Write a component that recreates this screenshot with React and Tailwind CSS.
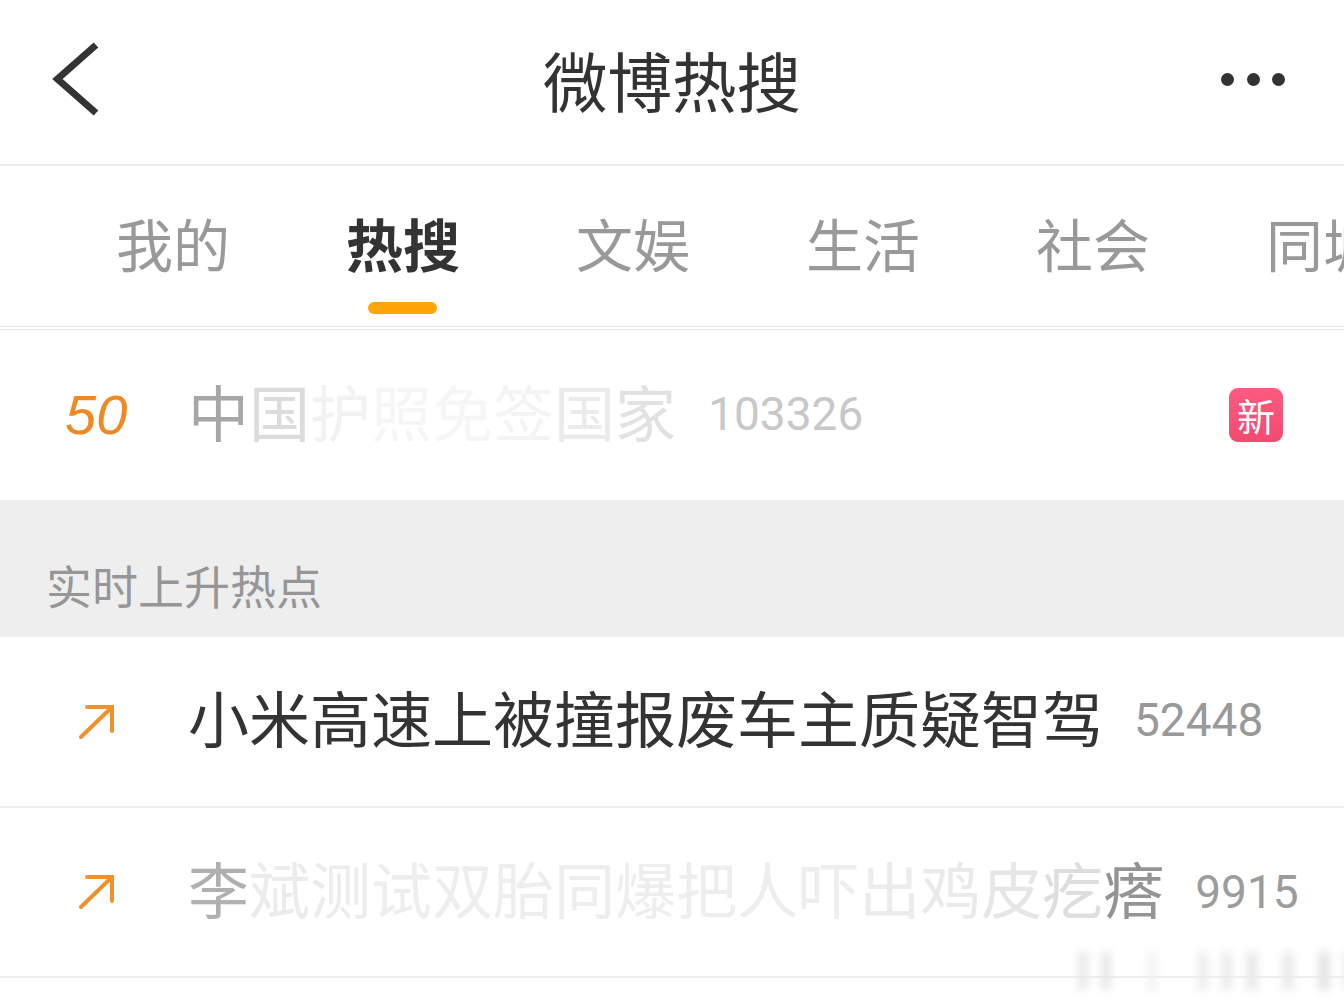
const CJK = "font-['Noto_Sans_CJK_SC','Noto_Sans',sans-serif]";

const TABS = ['我的', '热搜', '文娱', '生活', '社会', '同城'];

// per-character fade on the half-loaded titles: dark at the ends, almost white in between
const FadedTitle = ({ chars, colors }) => (
  <span className={`text-[61px] leading-none whitespace-nowrap mb-[10px] ${CJK}`}>
    {chars.split('').map((ch, i) => (
      <span key={i} style={{ color: colors[i] ?? '#f0f0f0' }}>{ch}</span>
    ))}
  </span>
);

const UpArrow = () => (
  <svg width="36" height="36" viewBox="0 0 36 36" fill="none" className="ml-[79px]">
    <path d="M2 33 L33 3 M8 3 H33 V27" stroke="#f0922c" strokeWidth="4" strokeLinecap="round" strokeLinejoin="miter" />
  </svg>
);

const Count = ({ children, color = 'text-[#999999]', ml }) => (
  <span className={`font-['Roboto',sans-serif] text-[46px] leading-none whitespace-nowrap ${color} ${ml}`}>{children}</span>
);

export default function App() {
  return (
    <div className={`relative w-[1344px] h-[1002px] overflow-hidden bg-white ${CJK}`}>
      {/* title bar */}
      <div className="flex items-center h-[166px] border-b-2 border-[#ececec] pl-[51px] pr-[59px] pb-[6px]">
        <div className="flex-1">
          <svg width="52" height="78" viewBox="0 0 52 78" fill="none">
            <path d="M45 5 L6.5 39 L45 73" stroke="#333333" strokeWidth="7" strokeLinecap="butt" strokeLinejoin="miter" />
          </svg>
        </div>
        <h1 className="text-[64.5px] leading-none font-normal text-[#333333] ml-[8px]">微博热搜</h1>
        <div className="flex-1 flex items-center justify-end gap-[12.5px]">
          <span className="w-[13px] h-[13px] rounded-full bg-[#333333]" />
          <span className="w-[13px] h-[13px] rounded-full bg-[#333333]" />
          <span className="w-[13px] h-[13px] rounded-full bg-[#333333]" />
        </div>
      </div>

      {/* channel tabs */}
      <div className="flex h-[164px] pl-[58px] border-b-[4px] border-double border-[#e6e6e6]">
        {TABS.map((tab, i) => (
          <div key={tab} className="relative flex justify-center w-[230px] shrink-0 pt-[48px]">
            <span className={`text-[57px] leading-none whitespace-nowrap ${i === 1 ? 'font-bold text-[#333333]' : 'text-[#999999]'}`}>
              {tab}
            </span>
            {i === 1 && <span className="absolute left-[80px] top-[136px] w-[69px] h-[12px] rounded-full bg-[#ffa50a]" />}
          </div>
        ))}
      </div>

      {/* rank 50 */}
      <div className="flex items-center h-[170px]">
        <span className="w-[188px] shrink-0 pl-[65px] font-['Liberation_Sans',sans-serif] italic text-[56px] leading-none text-[#ee8a26]">50</span>
        <FadedTitle
          chars="中国护照免签国家"
          colors={['#a6a6a6', '#dcdcdc', '#f2f2f2', '#f6f6f6', '#f6f6f6', '#f4f4f4', '#ebebeb', '#e2e2e2']}
        />
        <Count color="text-[#c8c8c8]" ml="ml-[32px] mb-[2px]">103326</Count>
        <span className="ml-auto mr-[61px] flex items-center justify-center w-[54px] h-[54px] rounded-[9px] bg-gradient-to-b from-[#fb5a80] to-[#f34a70] text-[38px] leading-none text-white">
          新
        </span>
      </div>

      {/* section heading */}
      <div className="flex items-end h-[137px] pb-[24px] pl-[46px] bg-[#eeeeee]">
        <span className="text-[46px] leading-[58px] text-[#969696]">实时上升热点</span>
      </div>

      {/* rising rows */}
      <div className="flex items-center h-[171px] border-b-2 border-[#eeeeee]">
        <div className="w-[188px] shrink-0"><UpArrow /></div>
        <span className="text-[61px] leading-none whitespace-nowrap text-[#333333] mb-[10px]">小米高速上被撞报废车主质疑智驾</span>
        <Count ml="ml-[31px] mb-[4px]">52448</Count>
      </div>
      <div className="flex items-center h-[170px] border-b-2 border-[#eeeeee]">
        <div className="w-[188px] shrink-0"><UpArrow /></div>
        <FadedTitle
          chars="李斌测试双胎同爆把人吓出鸡皮疙瘩"
          colors={['#b0b0b0', '#ececec', '#ececec', '#eeeeee', '#eeeeee', '#eeeeee', '#eeeeee', '#eeeeee', '#eeeeee', '#eeeeee', '#eeeeee', '#ececec', '#eaeaea', '#e6e6e6', '#dedede', '#949494']}
        />
        <Count color="text-[#9c9c9c]" ml="ml-[31px]">9915</Count>
      </div>

      {/* blurred watermark in the corner */}
      <div className="absolute left-[1078px] top-[952px] flex items-stretch gap-[14px] h-[38px] blur-[4px]">
        <span className="w-[10px] bg-[#e8e8e8]" />
        <span className="w-[8px] bg-[#e4e4e4]" />
        <span className="w-[8px] bg-[#f2f2f2] ml-[24px]" />
        <span className="w-[10px] bg-[#ececec] ml-[28px]" />
        <span className="w-[10px] bg-[#eaeaea]" />
        <span className="w-[12px] bg-[#e8e8e8]" />
        <span className="w-[12px] bg-[#eaeaea] ml-[10px]" />
        <span className="w-[12px] bg-[#e4e4e4] ml-[10px]" />
        <span className="w-[34px] bg-[#e8e8e8]" />
      </div>
    </div>
  );
}
